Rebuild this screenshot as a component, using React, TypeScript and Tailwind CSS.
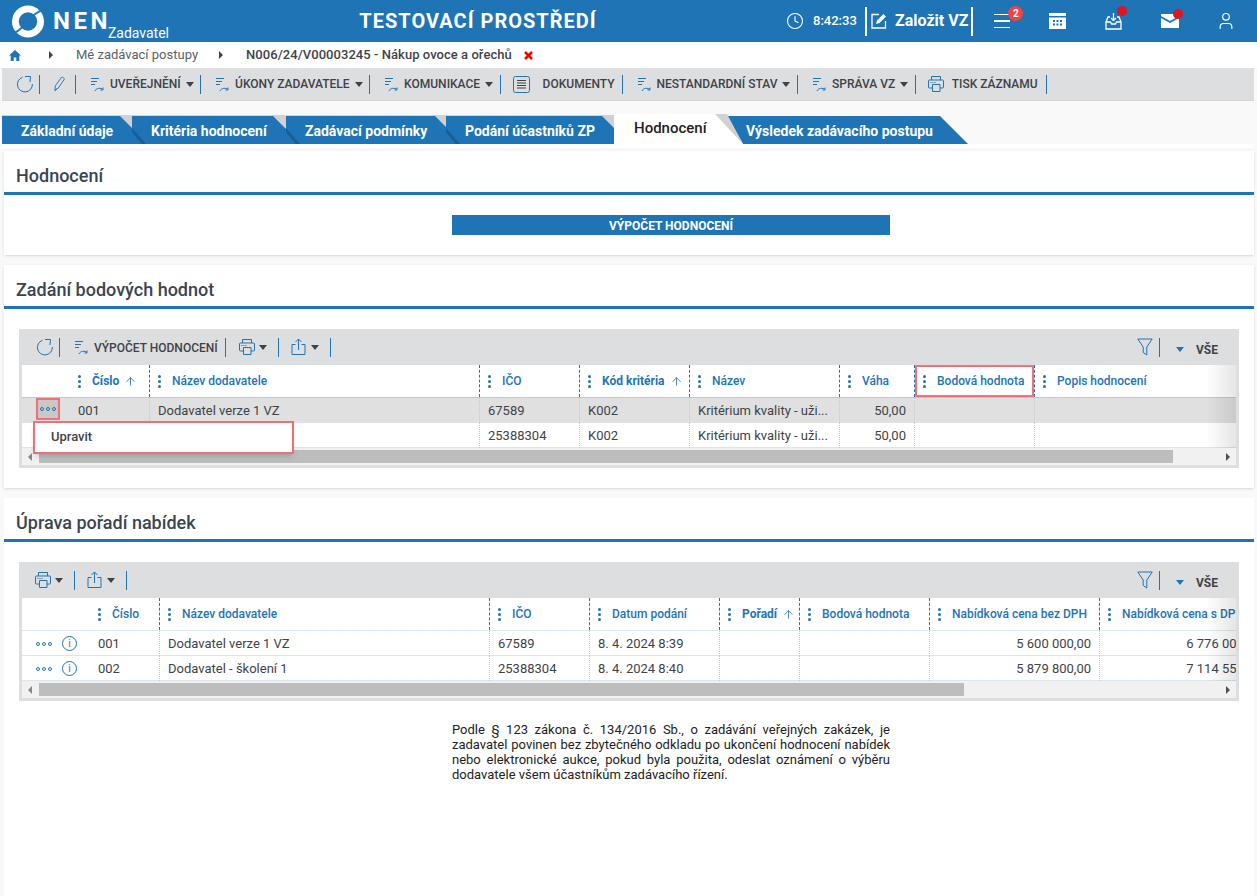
import type { ReactNode } from "react";
import { ArrowUp, Clock, User } from "lucide-react";

function Sep() {
    return <span className="w-px h-[19px] bg-[#1e74b4] shrink-0" />;
}

function Caret({ className = "border-t-[#3f4347]" }: { className?: string }) {
    return <span className={`inline-block w-0 h-0 border-x-4 border-x-transparent border-t-[5px] ${className}`} />;
}

function Reload() {
    return (
        <svg width="17" height="18" viewBox="0 0 17 18" fill="none" stroke="#1e74b4" strokeWidth="1">
            <path d="M6.500 2.300A7.500 7.500 0 1 0 16.400 9" />
            <path d="M9 1.500H14.500L14 7" />
        </svg>
    );
}

function ActionIcon() {
    return (
        <svg width="15" height="18" viewBox="0 0 15 18" fill="none" stroke="#1e74b4" strokeWidth="1">
            <path d="M1 3.500h8M1 6.500h6M1 9.500h4" />
            <path d="M5 16c1-3 6-3.500 8-1.500M13 12.500v2.500h-2.500" />
        </svg>
    );
}

function PrintIcon() {
    return (
        <svg width="16" height="16" viewBox="0 0 16 16" fill="none" stroke="#1e74b4" strokeWidth="1">
            <path d="M3.500 4V.5h9V4" />
            <path d="M4.500 12H1.500a1 1 0 0 1-1-1V5a1 1 0 0 1 1-1h13a1 1 0 0 1 1 1v6a1 1 0 0 1-1 1H12" />
            <path d="M4.500 8.500H12v7H4.500z" />
            <path d="M2.500 6.500h1M4.500 6.500h1M6.500 6.500h1" stroke="#5c6066" />
        </svg>
    );
}

function ShareIcon() {
    return (
        <svg width="15" height="18" viewBox="0 0 15 18" fill="none" stroke="#1e74b4" strokeWidth="1">
            <path d="M4.500 6.500H1v10h13v-10h-3.500" />
            <path d="M7.500 12V1M4.500 4l3-3 3 3" />
        </svg>
    );
}

function FunnelIcon() {
    return (
        <svg width="16" height="18" viewBox="0 0 16 18" fill="none" stroke="#1e74b4" strokeWidth="1">
            <path d="M.8 1h14.400L9.800 9v8L6.200 14.500V9z" />
        </svg>
    );
}

function Kebab() {
    return (
        <span className="flex flex-col gap-[2px] w-[3px] shrink-0">
            <i className="w-[3px] h-[3px] rounded-full bg-[#1e74b4]" />
            <i className="w-[3px] h-[3px] rounded-full bg-[#1e74b4]" />
            <i className="w-[3px] h-[3px] rounded-full bg-[#1e74b4]" />
        </span>
    );
}

function Dots() {
    return (
        <span className="flex gap-[2px]">
            <i className="w-[4px] h-[4px] rounded-full border border-[#1e74b4]" />
            <i className="w-[4px] h-[4px] rounded-full border border-[#1e74b4]" />
            <i className="w-[4px] h-[4px] rounded-full border border-[#1e74b4]" />
        </span>
    );
}

function Info() {
    return (
        <span className="w-[15px] h-[15px] rounded-full border border-[#1e74b4] flex items-center justify-center text-[10px] leading-none text-[#1e74b4]">i</span>
    );
}

function Header() {
    return (
        <header className="h-[42px] bg-[#1e74b4] flex items-center text-white">
            <div className="w-[340px] h-full flex items-center pl-[12px]">
                <svg width="32" height="33" viewBox="0 0 33 33">
                    <circle cx="16.500" cy="16.500" r="16.500" fill="white" />
                    <circle cx="16.500" cy="16.500" r="9.500" fill="#1e74b4" />
                    <path d="M32 4Q28 6 22 10" stroke="#1e74b4" strokeWidth="2" fill="none" />
                    <path d="M1 29Q6 27 11 22" stroke="#1e74b4" strokeWidth="2" fill="none" />
                </svg>
                <span className="ml-[9px] text-[24px] font-bold tracking-[3.500px] leading-none">NEN</span>
                <span className="self-end -ml-[3px] text-[14px] leading-[17px]">Zadavatel</span>
            </div>
            <div className="w-[276px] text-center text-[20px] font-bold tracking-[1px]">TESTOVACÍ PROSTŘEDÍ</div>
            <div className="ml-[170px] flex items-center h-full">
                <Clock size={18} strokeWidth={1.5} />
                <span className="ml-[9px] text-[13px] font-medium w-[44px]">8:42:33</span>
                <span className="ml-[8px] w-[2px] h-[29px] bg-white" />
                <svg className="ml-[3px]" width="18" height="18" viewBox="0 0 18 18" fill="none" stroke="white" strokeWidth="1.300">
                    <path d="M9 2.500H2v13.500h13.500V9" />
                    <path d="M6 12l1-3.500L13.500 2l2.500 2.500L9.500 11z" fill="white" stroke="none" />
                </svg>
                <span className="ml-[7px] text-[16px] font-bold whitespace-nowrap">Založit VZ</span>
                <span className="ml-[3px] w-[2px] h-[29px] bg-white" />
                <div className="relative ml-[21px] w-[16px] flex flex-col gap-[5px]">
                    <i className="h-[1.500px] bg-white" />
                    <i className="h-[1.500px] bg-white" />
                    <i className="h-[1.500px] bg-white" />
                    <span className="absolute -top-[8px] left-[14px] w-[15px] h-[15px] rounded-full bg-[#ef4444] text-[10px] font-bold flex items-center justify-center">2</span>
                </div>
                <svg className="ml-[39px]" width="17" height="16" viewBox="0 0 17 16" fill="white">
                    <path d="M0 0h17v3H0zM0 4.500h17V16H0z" />
                    <path d="M4 7h2v2H4zM7.500 7h2v2h-2zM11 7h2v2h-2zM4 10.500h2v2H4zM7.500 10.500h2v2h-2zM11 10.500h2v2h-2z" fill="#1e74b4" />
                </svg>
                <div className="relative ml-[39px]">
                    <svg width="17" height="18" viewBox="0 0 17 18" fill="none" stroke="white" strokeWidth="1.300" className="block">
                        <path d="M1 10l2-5h2M16 10l-2-5h-2M1 10v7h15v-7h-4.500l-1 2h-4l-1-2z" />
                        <path d="M8.500 1v7M6 6l2.500 2.500L11 6" />
                    </svg>
                    <span className="absolute -top-[6px] left-[12px] w-[10px] h-[10px] rounded-full bg-[#dd1620]" />
                </div>
                <div className="relative ml-[39px]">
                    <svg width="18" height="14" viewBox="0 0 18 14" className="block">
                        <path d="M0 0h18v2L9 7 0 2zM0 4l9 5 9-5v10H0z" fill="white" />
                    </svg>
                    <span className="absolute -top-[5px] left-[12px] w-[10px] h-[10px] rounded-full bg-[#dd1620]" />
                </div>
                <User className="ml-[37px]" size={20} strokeWidth={1.4} />
            </div>
        </header>
    );
}

function Breadcrumb() {
    return (
        <nav className="h-[26px] bg-white flex items-center text-[13px] text-[#5c6066]">
            <svg className="ml-[9px]" width="12" height="11" viewBox="0 0 12 11" fill="#1e74b4">
                <path d="M6 0l6 5.500h-1.700V11H7.300V7.500H4.700V11H1.700V5.500H0z" />
            </svg>
            <span className="ml-[28px] w-0 h-0 border-y-[4px] border-y-transparent border-l-[4px] border-l-[#3f4347]" />
            <span className="ml-[23px]">Mé zadávací postupy</span>
            <span className="ml-[21px] w-0 h-0 border-y-[4px] border-y-transparent border-l-[4px] border-l-[#3f4347]" />
            <span className="ml-[23px] font-medium text-[#3f4347] tracking-[0.05px]">N006/24/V00003245 - Nákup ovoce a ořechů</span>
            <svg className="ml-[12px]" width="9" height="9" viewBox="0 0 9 9" stroke="#ee0000" strokeWidth="2.500">
                <path d="M1 1l7 7M8 1L1 8" />
            </svg>
        </nav>
    );
}

function ToolItem({ label }: { label: string }) {
    return (
        <>
            <span className="ml-[14px] flex"><ActionIcon /></span>
            <span className="ml-[5px] text-[12px] font-medium text-[#3f4347] whitespace-nowrap">{label}</span>
            <span className="ml-[5px] mr-[6.500px] flex"><Caret /></span>
            <Sep />
        </>
    );
}

function MainToolbar() {
    return (
        <div className="h-[33px] ml-[2px] w-[1252px] bg-[#dcdee0] border-b border-[#d2d4d6] flex items-center">
            <span className="ml-[14px] flex"><Reload /></span>
            <span className="ml-[6px] flex"><Sep /></span>
            <svg className="ml-[13px]" width="13" height="18" viewBox="0 0 14 18" fill="none" stroke="#1e74b4" strokeWidth="1">
                <path d="M2 16l.5-5L9 2c1-1 3.500.5 3 2L6 13z" />
                <path d="M2 16l4-3" />
            </svg>
            <span className="ml-[9px] flex"><Sep /></span>
            <ToolItem label="UVEŘEJNĚNÍ" />
            <ToolItem label="ÚKONY ZADAVATELE" />
            <ToolItem label="KOMUNIKACE" />
            <svg className="ml-[12px]" width="17" height="17" viewBox="0 0 17 17" fill="none" stroke="#1e74b4" strokeWidth="1">
                <rect x=".5" y=".5" width="16" height="16" rx="2" />
                <path d="M4 4.500h9M4 7h9M4 9.500h9M4 12h9" stroke="#3f4347" />
            </svg>
            <span className="ml-[13px] text-[12px] font-medium text-[#3f4347]">DOKUMENTY</span>
            <span className="ml-[7px] flex"><Sep /></span>
            <ToolItem label="NESTANDARDNÍ STAV" />
            <ToolItem label="SPRÁVA VZ" />
            <span className="ml-[12px] flex"><PrintIcon /></span>
            <span className="ml-[8px] text-[12px] font-medium text-[#3f4347] whitespace-nowrap">TISK ZÁZNAMU</span>
            <span className="ml-[8px] flex"><Sep /></span>
        </div>
    );
}

const tabs = [
    { label: "Základní údaje", w: "w-[146px] -mr-[16px]" },
    { label: "Kritéria hodnocení", w: "w-[169px] -mr-[15px]" },
    { label: "Zadávací podmínky", w: "w-[177px] -mr-[17px]" },
    { label: "Podání účastníků ZP", w: "w-[184px] -mr-[16px]" },
];

function Tab({ label, w, first }: { label: string; w: string; first: boolean }) {
    return (
        <div className={`relative ${w} h-[29px] shrink-0`}>
            <div className="absolute inset-0 bg-[#cfd1d3] [clip-path:polygon(0_0,calc(100%-16px)_0,100%_100%,0_100%)]" />
            <div className="absolute inset-x-0 top-[1px] bottom-0 pt-[2px] bg-[#1e74b4] [clip-path:polygon(0_0,calc(100%-28px)_0,100%_100%,0_100%)] flex items-center pl-[19px] text-[14px] font-bold text-white whitespace-nowrap">
                {label}
            </div>
            {!first && <div className="absolute left-0 bottom-0 w-[14px] h-[16px] bg-[#175f96] [clip-path:polygon(0_0,100%_100%,70%_100%,0_25%)]" />}
        </div>
    );
}

function Tabs() {
    return (
        <div className="flex h-[29px] mt-[14px] ml-[2px] w-[1252px]">
            {tabs.map((t, i) => <Tab key={t.label} label={t.label} w={t.w} first={i === 0} />)}
            <div className="relative z-10 w-[129px] h-[30px] -mt-[1px] -mr-[16px] shrink-0">
                <div className="absolute inset-0 bg-[#cfd1d3] [clip-path:polygon(0_0,calc(100%-16px)_0,100%_100%,0_100%)]" />
                <div className="absolute inset-0 bg-white [clip-path:polygon(0_0,calc(100%-28px)_0,100%_100%,0_100%)] flex items-center pl-[20px] pb-[1px] text-[15px] font-medium text-[#222]">Hodnocení</div>
            </div>
            <div className="relative w-[241px] h-[28px] mt-[1px] pt-[2px] shrink-0 bg-[#1e74b4] [clip-path:polygon(0_0,calc(100%-28px)_0,100%_100%,16px_100%)] flex items-center pl-[19px] text-[14px] font-bold text-white whitespace-nowrap">Výsledek zadávacího postupu</div>
        </div>
    );
}

function SectionTitle({ children }: { children: string }) {
    return (
        <div className="h-[44px] pl-[12px] pt-[13px] border-b-[3px] border-[#1e74b4] text-[18px] font-medium leading-[24px] text-[#3a4550]">
            {children}
        </div>
    );
}

type Col = { label: string; w: string; pad?: string; sort?: boolean; bold?: boolean; red?: boolean; last?: boolean };

function HeadCell({ col }: { col: Col }) {
    return (
        <div className={`${col.w} ${col.pad ?? "pl-[8px]"} shrink-0 h-full relative flex items-center gap-[11px] text-[12px] whitespace-nowrap text-[#1e74b4] ${col.last ? "" : "border-r border-dashed border-[#1e74b4]"} ${col.bold ? "font-bold" : "font-medium"}`}>
            <Kebab />
            <span>{col.label}</span>
            {col.sort && <ArrowUp size={13} strokeWidth={1.5} className="-ml-[6px]" />}
            {col.red && <span className="absolute inset-0 border-2 border-[#f07178] rounded-[1px]" />}
        </div>
    );
}

function Cell({ w, right, last, children }: { w: string; right?: boolean; last?: boolean; children?: string }) {
    return (
        <div className={`${w} shrink-0 h-full flex items-center px-[8px] whitespace-nowrap ${last ? "" : "overflow-hidden border-r border-dotted border-[#c8c8c8]"} ${right ? "justify-end" : ""}`}>
            {children}
        </div>
    );
}

function Scrollbar({ thumb }: { thumb: string }) {
    return (
        <div className="h-[17px] bg-[#f1f1f1] flex items-center">
            <span className="ml-[6px] w-0 h-0 border-y-[4px] border-y-transparent border-r-[4px] border-r-[#888]" />
            <div className={`ml-[7px] ${thumb} h-[13px] bg-[#bdbdbd]`} />
            <span className="ml-auto mr-[6px] w-0 h-0 border-y-[4px] border-y-transparent border-l-[4px] border-l-[#505050]" />
        </div>
    );
}

function GridToolbar({ children }: { children: ReactNode }) {
    return (
        <div className="h-[36px] flex items-center">
            {children}
            <div className="ml-auto flex items-center">
                <FunnelIcon />
                <span className="ml-[6px] flex"><Sep /></span>
                <span className="ml-[16px] pt-[4px] flex"><Caret className="border-t-[#1e74b4]" /></span>
                <span className="ml-[12px] mr-[18px] pt-[5px] text-[12px] font-bold text-[#3f4347]">VŠE</span>
            </div>
        </div>
    );
}

function ExportTools() {
    return (
        <>
            <span className="ml-[13px] flex"><PrintIcon /></span>
            <span className="ml-[4px] flex"><Caret /></span>
            <span className="ml-[11px] flex"><Sep /></span>
            <span className="ml-[12px] flex"><ShareIcon /></span>
            <span className="ml-[5px] flex"><Caret /></span>
            <span className="ml-[11px] flex"><Sep /></span>
        </>
    );
}

// stin na pravem okraji tabulky
function RightFade() {
    return <div className="absolute right-0 top-0 bottom-[17px] w-[30px] bg-gradient-to-r from-transparent to-black/10" />;
}

const cols1: Col[] = [
    { label: "Číslo", w: "w-[128px]", pad: "pl-[56px]", sort: true, bold: true },
    { label: "Název dodavatele", w: "w-[330px]" },
    { label: "IČO", w: "w-[100px]" },
    { label: "Kód kritéria", w: "w-[110px]", sort: true, bold: true },
    { label: "Název", w: "w-[150px]" },
    { label: "Váha", w: "w-[75px]" },
    { label: "Bodová hodnota", w: "w-[120px]", red: true },
    { label: "Popis hodnocení", w: "w-[201px]", last: true },
];

const rows1 = [
    { no: "001", name: "Dodavatel verze 1 VZ", ico: "67589", bg: "bg-[#e0e0e0]" },
    { no: "", name: "Dodavatel - školení 1", ico: "25388304", bg: "shadow-[inset_0_-1px_0_#dde6ec]" },
];

function BodoveTable() {
    return (
        <div className="ml-[15px] w-[1220px] mt-[20px] bg-[#dcdee0] px-[3px] pb-[3px] relative">
            <GridToolbar>
                <span className="ml-[14px] flex"><Reload /></span>
                <span className="ml-[6px] flex"><Sep /></span>
                <span className="ml-[14px] flex"><ActionIcon /></span>
                <span className="ml-[5px] pt-[2px] text-[12px] font-medium text-[#3f4347]">VÝPOČET HODNOCENÍ</span>
                <span className="ml-[7px] flex"><Sep /></span>
                <ExportTools />
            </GridToolbar>
            <div className="bg-white overflow-hidden relative">
                <div className="h-[33px] flex border-b border-[#c4c8cc]">
                    {cols1.map(c => <HeadCell key={c.label} col={c} />)}
                </div>
                {rows1.map(r => (
                    <div key={r.ico} className={`h-[25px] flex items-center text-[13px] text-[#3f4347] ${r.bg}`}>
                        <div className="w-[128px] shrink-0 h-full flex items-center pl-[56px] border-r border-dotted border-[#c8c8c8]">{r.no}</div>
                        <Cell w="w-[330px]">{r.name}</Cell>
                        <Cell w="w-[100px]">{r.ico}</Cell>
                        <Cell w="w-[110px]">K002</Cell>
                        <Cell w="w-[150px]">Kritérium kvality - uži...</Cell>
                        <Cell w="w-[75px]" right>50,00</Cell>
                        <Cell w="w-[120px]" />
                        <Cell w="w-[201px]" last />
                    </div>
                ))}
                <Scrollbar thumb="w-[1134px]" />
                <RightFade />
            </div>
            {/* vybrany radek: tlacitko a kontextove menu lezi nad tabulkou */}
            <div className="absolute left-[17px] top-[69px] w-[24px] h-[22px] bg-[#c8c8c8] border-2 border-[#f07178] flex items-center justify-center"><Dots /></div>
            <div className="absolute left-[14px] top-[92px] w-[261px] h-[33px] bg-white border-2 border-[#f0707a] shadow-md flex items-center pl-[16px] pb-[2px] text-[13px] font-medium text-[#3f4347]">Upravit</div>
        </div>
    );
}

const cols2: Col[] = [
    { label: "Číslo", w: "w-[138px]", pad: "pl-[76px]" },
    { label: "Název dodavatele", w: "w-[330px]" },
    { label: "IČO", w: "w-[100px]" },
    { label: "Datum podání", w: "w-[130px]" },
    { label: "Pořadí", w: "w-[80px]", sort: true, bold: true },
    { label: "Bodová hodnota", w: "w-[130px]" },
    { label: "Nabídková cena bez DPH", w: "w-[170px]" },
    { label: "Nabídková cena s DPH", w: "w-[170px]" },
];

const rows2 = [
    ["001", "Dodavatel verze 1 VZ", "67589", "8. 4. 2024 8:39", "5 600 000,00", "6 776 000,00"],
    ["002", "Dodavatel - školení 1", "25388304", "8. 4. 2024 8:40", "5 879 800,00", "7 114 558,00"],
];

function PoradiTable() {
    return (
        <div className="ml-[15px] w-[1220px] mt-[20px] bg-[#dcdee0] px-[3px] pb-[3px]">
            <GridToolbar>
                <ExportTools />
            </GridToolbar>
            <div className="bg-white overflow-hidden relative">
                <div className="h-[33px] flex border-b border-[#dde6ec]">
                    {cols2.map(c => <HeadCell key={c.label} col={c} />)}
                </div>
                {rows2.map(r => (
                    <div key={r[0]} className="h-[25px] flex items-center text-[13px] text-[#3f4347] shadow-[inset_0_-1px_0_#dde6ec]">
                        <div className="w-[138px] shrink-0 h-full flex items-center pl-[14px] border-r border-dotted border-[#c8c8c8]">
                            <Dots />
                            <span className="ml-[10px]"><Info /></span>
                            <span className="ml-[21px]">{r[0]}</span>
                        </div>
                        <Cell w="w-[330px]">{r[1]}</Cell>
                        <Cell w="w-[100px]">{r[2]}</Cell>
                        <Cell w="w-[130px]">{r[3]}</Cell>
                        <Cell w="w-[80px]" />
                        <Cell w="w-[130px]" />
                        <Cell w="w-[170px]" right>{r[4]}</Cell>
                        <Cell w="w-[170px]" right>{r[5]}</Cell>
                    </div>
                ))}
                <Scrollbar thumb="w-[925px]" />
                <RightFade />
            </div>
        </div>
    );
}

export default function App() {
    return (
        <div className="h-[896px] w-[1257px] overflow-hidden bg-[#f9f9f9] font-['Roboto',sans-serif]">
            <Header />
            <Breadcrumb />
            <MainToolbar />
            <Tabs />
            <div className="h-[4px] ml-[2px] w-[1252px] bg-white" />
            <section className="mt-[3px] ml-[4px] w-[1250px] h-[104px] bg-white shadow-sm">
                <SectionTitle>Hodnocení</SectionTitle>
                <div className="mt-[20px] ml-[448px] w-[438px] h-[20px] pt-[2px] bg-[#1e74b4] flex items-center justify-center text-[12px] font-bold text-white">VÝPOČET HODNOCENÍ</div>
            </section>
            <section className="mt-[10px] ml-[4px] w-[1250px] h-[223px] bg-white shadow-sm">
                <SectionTitle>Zadání bodových hodnot</SectionTitle>
                <BodoveTable />
            </section>
            <section className="mt-[10px] ml-[4px] w-[1250px] h-[398px] bg-white">
                <SectionTitle>Úprava pořadí nabídek</SectionTitle>
                <PoradiTable />
                <p className="mt-[21px] ml-[448px] w-[438px] text-[13px] leading-[15px] text-[#222] text-justify">
                    Podle § 123 zákona č. 134/2016 Sb., o zadávání veřejných zakázek, je zadavatel povinen bez zbytečného odkladu po ukončení hodnocení nabídek nebo elektronické aukce, pokud byla použita, odeslat oznámení o výběru dodavatele všem účastníkům zadávacího řízení.
                </p>
            </section>
        </div>
    );
}
